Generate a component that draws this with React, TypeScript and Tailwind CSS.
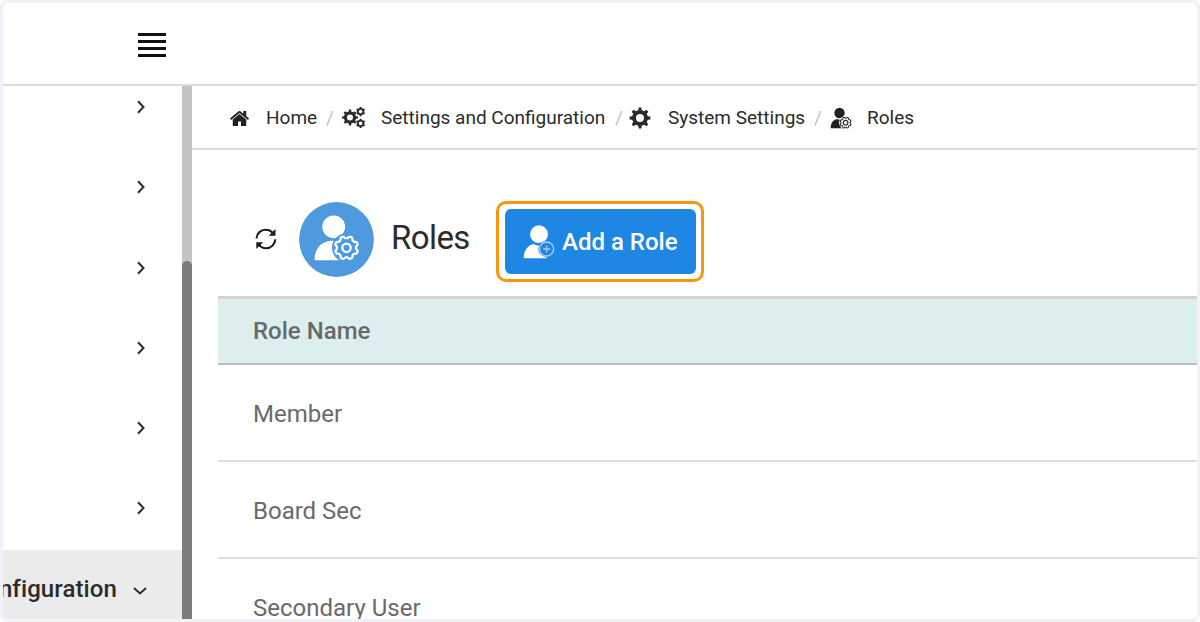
import React from "react";

const HOME_PATH =
  "M1472 992v480q0 26-19 45t-45 19h-384v-384h-256v384h-384q-26 0-45-19t-19-45v-480q0-1 .5-3t.5-3l575-474 575 474q1 2 1 6zm223-69l-62 74q-8 9-21 11h-3q-13 0-21-7l-692-577-692 577q-12 8-24 7-13-2-21-11l-62-74q-8-10-7-23.5t11-21.5l719-599q32-26 76-26t76 26l244 204v-195q0-14 9-23t23-9h192q14 0 23 9t9 23v408l219 182q10 8 11 21.5t-7 23.5z";

// outline of a cog: `teeth` flat teeth between the inner and outer radius
function cogPath(cx: number, cy: number, outer: number, inner: number, teeth: number) {
  const step = (Math.PI * 2) / teeth;
  const points: string[] = [];
  for (let i = 0; i < teeth; i++) {
    const a = i * step - Math.PI / 2;
    [
      [-0.27, inner],
      [-0.17, outer],
      [0.17, outer],
      [0.27, inner],
    ].forEach(([offset, r]) => {
      const t = a + offset * step;
      points.push(`${(cx + r * Math.cos(t)).toFixed(2)} ${(cy + r * Math.sin(t)).toFixed(2)}`);
    });
  }
  return `M${points.join("L")}Z`;
}

function holePath(cx: number, cy: number, r: number) {
  return `M${cx - r} ${cy}a${r} ${r} 0 1 0 ${r * 2} 0a${r} ${r} 0 1 0 ${-r * 2} 0Z`;
}

// cog drawn as a wavy ring, used inside the user icons
function wavyCogPath(cx: number, cy: number, radius: number, depth: number) {
  const points: string[] = [];
  for (let i = 0; i < 96; i++) {
    const t = (i / 96) * Math.PI * 2;
    const r = radius + depth * Math.tanh(2 * Math.cos(8 * t + Math.PI));
    points.push(`${(cx + r * Math.cos(t)).toFixed(2)} ${(cy + r * Math.sin(t)).toFixed(2)}`);
  }
  return `M${points.join("L")}Z`;
}

function HomeIcon() {
  return (
    <svg viewBox="0 0 1792 1792" className="h-[21px] w-[21px] fill-[#222]">
      <path d={HOME_PATH} />
    </svg>
  );
}

function CogIcon() {
  return (
    <svg viewBox="0 0 22 22" className="h-[22px] w-[22px] fill-[#2b2b2b]">
      <path fillRule="evenodd" d={cogPath(11, 11, 10.5, 8, 8) + holePath(11, 11, 4)} />
    </svg>
  );
}

function CogsIcon() {
  return (
    <svg viewBox="0 0 24 22" className="h-[22px] w-6 fill-[#2b2b2b]">
      <path fillRule="evenodd" d={cogPath(8, 10.5, 8, 6.2, 8) + holePath(8, 10.5, 3)} />
      <path fillRule="evenodd" d={cogPath(18.6, 4.6, 4.7, 3.8, 6) + holePath(18.6, 4.6, 1.8)} />
      <path fillRule="evenodd" d={cogPath(18.6, 16.4, 4.7, 3.8, 6) + holePath(18.6, 16.4, 1.8)} />
    </svg>
  );
}

function UserCogIcon() {
  return (
    <svg viewBox="0 0 22 22" className="h-[22px] w-[22px]">
      <circle cx="9.5" cy="6" r="5.2" fill="#222" />
      <path d="M.7 21.200c0-5 2.300-8.200 6.300-9.200c1.600 1 3.300 1 5 0l3 3v6.200z" fill="#222" />
      <circle cx="15.600" cy="15.700" r="6.600" fill="#fff" />
      <path d={wavyCogPath(15.6, 15.7, 5.1, 0.5)} fill="none" stroke="#333" strokeWidth="1.100" />
      <circle cx="15.600" cy="15.700" r="2.300" fill="none" stroke="#333" strokeWidth="1.200" />
    </svg>
  );
}

function RefreshIcon() {
  return (
    <svg viewBox="0 0 22 22" className="h-[22px] w-[22px]">
      <g fill="none" stroke="#1c1c1c" strokeWidth="2.100">
        <path d="M1.500 10.500C1.700 5.200 6 1.700 10.600 1.700c3.400 0 6 1.500 7.600 4" />
        <path d="M20.300 11.300c-.2 5.300-4.400 8.900-9.200 8.900c-3.300 0-5.900-1.500-7.500-4" />
      </g>
      <path d="M20.500 1v6.800h-6.900z" fill="#1c1c1c" />
      <path d="M1.300 21v-6.800h6.900z" fill="#1c1c1c" />
    </svg>
  );
}

function RoleBadge() {
  return (
    <svg viewBox="0 0 75 75" className="h-[75px] w-[75px]">
      <circle cx="37.500" cy="37.500" r="37.400" fill="#4f99de" />
      <circle cx="34.700" cy="24.800" r="11.400" fill="#fff" />
      <path d="M15.500 58.200c0-11 6.500-19.500 17.500-19.500h12v19.500z" fill="#fff" />
      <circle cx="47.500" cy="45.800" r="14.500" fill="#4f99de" />
      <path
        d={wavyCogPath(47.5, 45.8, 10.6, 1.1)}
        fill="#4f99de"
        stroke="#fff"
        strokeWidth="2.200"
        strokeLinejoin="round"
      />
      <circle cx="47.500" cy="45.800" r="4.200" fill="none" stroke="#fff" strokeWidth="2.200" />
    </svg>
  );
}

function AddUserIcon() {
  return (
    <svg viewBox="0 0 32 34" className="h-[34px] w-8 shrink-0">
      <circle cx="16" cy="9.200" r="8.900" fill="#fff" />
      <path d="M.7 33.300c0-7.500 3.800-12.800 9.800-14.200c3.500 2 7.500 2 11 0l2 4v10.200z" fill="#fff" />
      <circle cx="23.600" cy="24" r="8.300" fill="#1e87e3" />
      <circle cx="23.600" cy="24" r="7" fill="none" stroke="#a5cff4" strokeWidth="1.300" />
      <path d="M23.600 20.500v7M20.100 24h7" stroke="#a5cff4" strokeWidth="1.300" />
    </svg>
  );
}

function ChevronRight() {
  return (
    <svg viewBox="0 0 10 14" className="h-3.5 w-2.5" fill="none" stroke="#2b2b2b" strokeWidth="2">
      <path d="M2 1.200l5.500 5.800l-5.500 5.800" />
    </svg>
  );
}

function ChevronDown() {
  return (
    <svg viewBox="0 0 14 10" className="mt-1 h-2.5 w-3.5 shrink-0" fill="none" stroke="#2b2b2b" strokeWidth="1.900">
      <path d="M1 2l6 5.500l6-5.500" />
    </svg>
  );
}

const sections = [1, 2, 3, 4, 5, 6];
const roles = ["Member", "Board Sec", "Secondary User"];

function TopBar() {
  return (
    <header className="flex h-[83px] shrink-0 border-b-2 border-[#dcdcdc] pt-[30px] pl-[135px]">
      <button aria-label="Toggle menu" className="flex h-6 w-7 flex-col justify-between">
        <span className="h-[3px] w-full bg-[#111]" />
        <span className="h-[3px] w-full bg-[#111]" />
        <span className="h-[3px] w-full bg-[#111]" />
        <span className="h-[3px] w-full bg-[#111]" />
      </button>
    </header>
  );
}

function Sidebar() {
  return (
    <aside className="flex w-[189px] shrink-0">
      <nav className="flex w-[179px] flex-col overflow-hidden">
        <div className="flex h-[464px] shrink-0 flex-col gap-[66.3px] pt-[14px] pl-[133px]">
          {sections.map((section) => (
            <ChevronRight key={section} />
          ))}
        </div>
        <div className="flex flex-1 items-center justify-end bg-[#ebebeb] pt-2 pr-[35px]">
          <span className="mr-4 text-[24px] leading-8 font-medium tracking-[0.1px] whitespace-nowrap text-[#2b2b2b]">
            nfiguration
          </span>
          <ChevronDown />
        </div>
      </nav>
      <div className="w-2.5 bg-[#c4c4c4] pt-[175px]">
        <div className="h-full rounded-t-[5px] bg-[#7c7c7c]" />
      </div>
    </aside>
  );
}

function Breadcrumb() {
  return (
    <nav className="flex h-[64px] shrink-0 items-center border-b-2 border-[#dcdcdc] pt-0.5 pl-[37px] text-[19px] whitespace-nowrap text-[#2b2b2b]">
      <HomeIcon />
      <span className="ml-4 w-[60px]">Home</span>
      <span className="w-4 text-[#c2c2c2]">/</span>
      <CogsIcon />
      <span className="ml-[15px] w-[234px]">Settings and Configuration</span>
      <span className="w-[14px] text-[#c2c2c2]">/</span>
      <CogIcon />
      <span className="ml-[17px] w-[146px]">System Settings</span>
      <span className="w-4 text-[#c2c2c2]">/</span>
      <UserCogIcon />
      <span className="ml-[15px]">Roles</span>
    </nav>
  );
}

function PageTitle() {
  return (
    <div className="flex h-[146px] shrink-0 items-start pl-[63px]">
      <div className="mt-[78px]">
        <RefreshIcon />
      </div>
      <div className="mt-[52px] ml-[22px]">
        <RoleBadge />
      </div>
      <h1 className="mt-[68px] ml-[17px] w-[105px] text-[33px] leading-10 tracking-[-0.6px] text-[#2b2b2b]">
        Roles
      </h1>
      <div className="mt-[51px] h-[81px] w-[208px] rounded-[10px] border-3 border-[#fb9510] p-[5px] pl-[6px]">
        <button className="flex h-full w-full items-center rounded-md bg-[#1e87e3] pl-[18px] text-[24px] font-medium text-white">
          <AddUserIcon />
          <span className="ml-[7px] whitespace-nowrap">Add a Role</span>
        </button>
      </div>
    </div>
  );
}

export default function App() {
  return (
    <div className="h-[622px] w-[1200px] overflow-hidden bg-white font-['Roboto',sans-serif]">
      <div className="flex h-full flex-col overflow-hidden rounded-lg border-3 border-[#f2f1f7] bg-white">
        <TopBar />
        <div className="flex min-h-0 flex-1">
          <Sidebar />
          <main className="flex min-w-0 flex-1 flex-col">
            <Breadcrumb />
            <PageTitle />
            <div className="ml-[26px] flex flex-col text-[24px] text-[#696969]">
              <div className="flex h-[69px] shrink-0 items-center border-t-3 border-b-2 border-t-[#d3d3d3] border-b-[#b8bebd] bg-[#dcefee] pl-[35px] font-medium">
                Role Name
              </div>
              {roles.map((role) => (
                <div
                  key={role}
                  className="flex h-[97px] shrink-0 items-center border-b-2 border-[#dedede] pt-0.5 pl-[35px]"
                >
                  {role}
                </div>
              ))}
            </div>
          </main>
        </div>
      </div>
    </div>
  );
}
